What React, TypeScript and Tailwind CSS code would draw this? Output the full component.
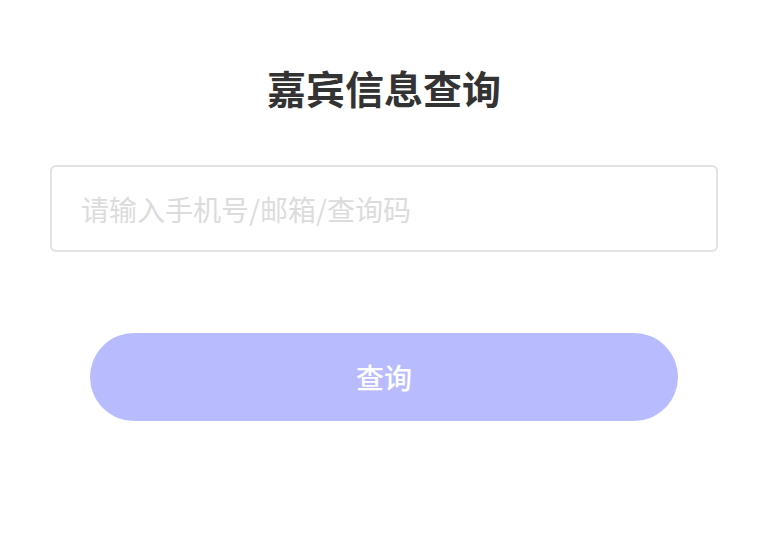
import { useState } from "react";

export default function App() {
  const [value, setValue] = useState("");

  return (
    <div className="min-h-screen w-full bg-white px-[50px] pt-[58px] font-['Noto_Sans_CJK_SC','Noto_Sans',sans-serif]">
      {/* Title */}
      <h1 className="text-center text-[39px] leading-[58px] font-bold text-[#333333]">嘉宾信息查询</h1>

      {/* Search input */}
      <input
        type="text"
        value={value}
        onChange={(e) => setValue(e.target.value)}
        placeholder="请输入手机号/邮箱/查询码"
        className="mt-[49px] block h-[87px] w-full rounded-[6px] border-2 border-[#e3e3e3] px-[29px] text-[28px] text-[#333333] outline-none placeholder:text-[#dcdcdc]"
      />

      {/* Submit */}
      <div className="px-[40px] pt-[81px]">
        <button className="flex h-[88px] w-full items-center justify-center rounded-full bg-[#b8bcff] text-[28px] font-medium text-white">
          查询
        </button>
      </div>
    </div>
  );
}
